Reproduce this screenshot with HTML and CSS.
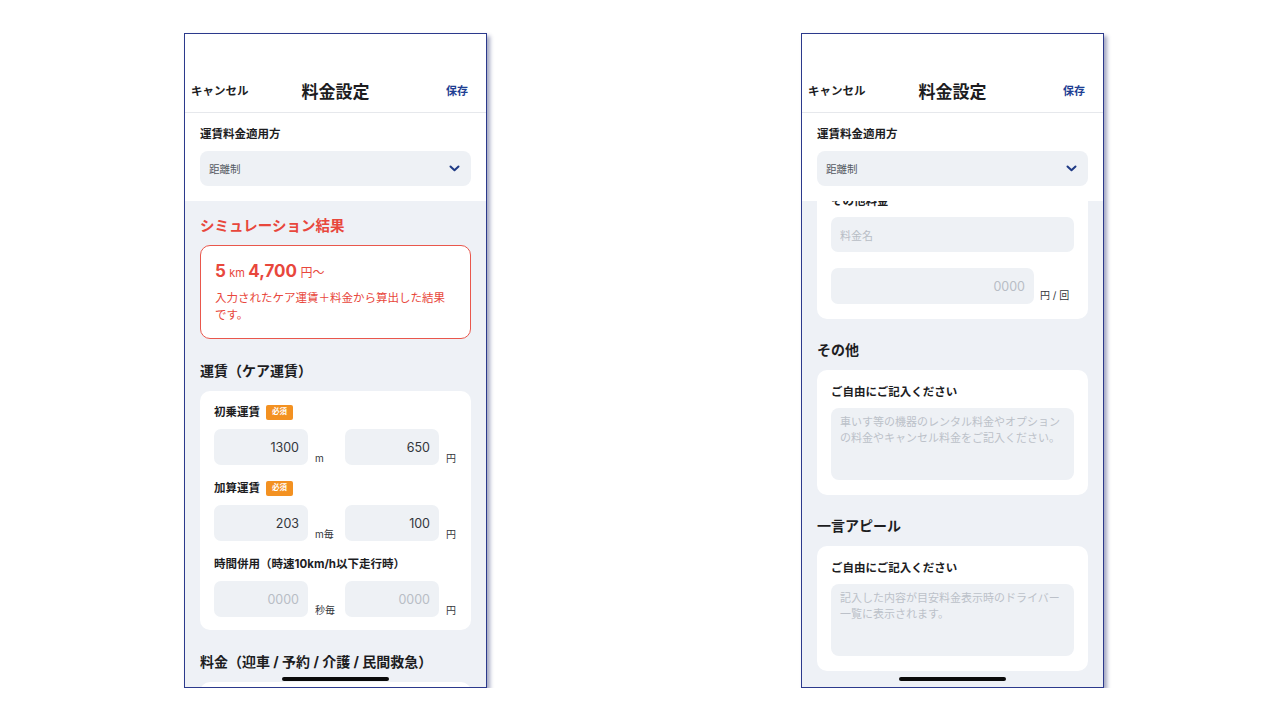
FILE: index.html
```html
<!DOCTYPE html>
<html lang="ja">

<head>
    <meta charset="utf-8">
    <meta name="viewport" content="width=device-width, initial-scale=1.0">
    <title>料金設定</title>
    <link rel="stylesheet" href="styles.css">
</head>

<body>
    <div class="screens">

        <!-- 画面1 -->
        <div class="phone">
            <header>
                <div class="nav">
                    <span class="cancel">キャンセル</span>
                    <h1>料金設定</h1>
                    <span class="save">保存</span>
                </div>
            </header>
            <section class="method">
                <p class="label">運賃料金適用方</p>
                <div class="select">
                    <span>距離制</span>
                    <svg width="11" height="7" viewBox="0 0 11 7"><path d="M1.5 1.5 5.5 5.3l4-3.8" fill="none" stroke="#1f3a85" stroke-width="2" stroke-linecap="round" stroke-linejoin="round"/></svg>
                </div>
            </section>
            <div class="scroll">
                <h2 class="sim-title">シミュレーション結果</h2>
                <div class="sim-box">
                    <p class="sim-value"><b>5</b> <small>km</small> <b>4,700</b> <span>円〜</span></p>
                    <p class="sim-text">入力されたケア運賃＋料金から算出した結果です。</p>
                </div>

                <h2>運賃（ケア運賃）</h2>
                <div class="card">
                    <div class="field">
                        <p class="label">初乗運賃 <span class="badge">必須</span></p>
                        <div class="pair">
                            <div class="group"><div class="input">1300</div><span class="unit">m</span></div>
                            <div class="group"><div class="input">650</div><span class="unit">円</span></div>
                        </div>
                    </div>
                    <div class="field">
                        <p class="label">加算運賃 <span class="badge">必須</span></p>
                        <div class="pair">
                            <div class="group"><div class="input">203</div><span class="unit">m毎</span></div>
                            <div class="group"><div class="input">100</div><span class="unit">円</span></div>
                        </div>
                    </div>
                    <div class="field">
                        <p class="label">時間併用（時速10km/h以下走行時）</p>
                        <div class="pair">
                            <div class="group"><div class="input empty">0000</div><span class="unit">秒毎</span></div>
                            <div class="group"><div class="input empty">0000</div><span class="unit">円</span></div>
                        </div>
                    </div>
                </div>

                <h2>料金（迎車 / 予約 / 介護 / 民間救急）</h2>
                <div class="card"></div>
            </div>
            <div class="home-bar"></div>
        </div>

        <!-- 画面2 -->
        <div class="phone">
            <header>
                <div class="nav">
                    <span class="cancel">キャンセル</span>
                    <h1>料金設定</h1>
                    <span class="save">保存</span>
                </div>
            </header>
            <section class="method">
                <p class="label">運賃料金適用方</p>
                <div class="select">
                    <span>距離制</span>
                    <svg width="11" height="7" viewBox="0 0 11 7"><path d="M1.5 1.5 5.5 5.3l4-3.8" fill="none" stroke="#1f3a85" stroke-width="2" stroke-linecap="round" stroke-linejoin="round"/></svg>
                </div>
            </section>
            <div class="scroll scrolled">
                <div class="card">
                    <p class="label">その他料金</p>
                    <div class="input wide empty left">料金名</div>
                    <div class="group other">
                        <div class="input empty">0000</div><span class="unit">円 / 回</span>
                    </div>
                </div>

                <h2>その他</h2>
                <div class="card">
                    <p class="label">ご自由にご記入ください</p>
                    <div class="textarea">車いす等の機器のレンタル料金やオプションの料金やキャンセル料金をご記入ください。</div>
                </div>

                <h2>一言アピール</h2>
                <div class="card">
                    <p class="label">ご自由にご記入ください</p>
                    <div class="textarea">記入した内容が目安料金表示時のドライバー一覧に表示されます。</div>
                </div>
            </div>
            <div class="home-bar"></div>
        </div>

    </div>
</body>

</html>
```

FILE: styles.css
```css
body {
    margin: 0;
    padding: 0;
    background: #ffffff;
    font-family: "Inter", "Noto Sans CJK JP", sans-serif;
    color: #1d1d1f;
}

p,
h1,
h2 {
    margin: 0;
}

.screens {
    display: flex;
    gap: 314px;
    padding: 33px 0 0 184px;
}

.phone {
    position: relative;
    width: 303px;
    height: 655px;
    box-sizing: border-box;
    border: 1px solid #2c3a8c;
    box-shadow: 3px 3px 4px rgba(50, 60, 120, 0.45);
    background: #ffffff;
    display: flex;
    flex-direction: column;
    overflow: hidden;
}

header {
    padding-top: 34px;
    border-bottom: 1px solid #e6e8ec;
}

.nav {
    height: 44px;
    display: grid;
    grid-template-columns: 1fr auto 1fr;
    align-items: center;
    padding: 0 12px;
}

.cancel {
    margin-left: -6px;
    font-size: 11.5px;
    font-weight: 700;
}

.nav h1 {
    font-size: 17px;
    font-weight: 700;
}

.save {
    text-align: right;
    padding-right: 6px;
    font-size: 11px;
    font-weight: 700;
    color: #1f3f93;
}

.method {
    padding: 13px 15px 15px;
}

.label {
    font-size: 11.5px;
    font-weight: 700;
    line-height: 16px;
    display: flex;
    align-items: center;
}

.select {
    margin-top: 9px;
    height: 35px;
    background: #eef1f5;
    border-radius: 8px;
    display: flex;
    align-items: center;
    justify-content: space-between;
    padding: 0 11px 0 9px;
    font-size: 10.5px;
    color: #555a62;
}

.scroll {
    flex: 1;
    overflow: hidden;
    background: #eef1f6;
    padding: 14px 15px 0;
}

.scrolled {
    padding-top: 0;
}

.scrolled > .card:first-child {
    margin-top: -22px;
}

h2 {
    font-size: 14px;
    font-weight: 700;
    line-height: 20px;
    margin: 22px 0 10px;
}

.scrolled h2 {
    margin-top: 21px;
}

.sim-title {
    font-size: 14.5px;
    line-height: 22px;
    margin: 0 0 8px;
    color: #e8473c;
}

.sim-box {
    background: #ffffff;
    border: 1.5px solid #e9574c;
    border-radius: 10px;
    padding: 13px 14px 14px;
    color: #e8473c;
}

.sim-value {
    line-height: 24px;
    font-size: 12px;
}

.sim-value b {
    font-size: 17px;
}

.sim-value small {
    font-size: 11px;
}

.sim-text {
    margin-top: 5px;
    font-size: 11.5px;
    line-height: 17px;
}

.card {
    background: #ffffff;
    border-radius: 10px;
    padding: 13px 14px;
    min-height: 20px;
}

.field + .field {
    margin-top: 15px;
}

.badge {
    margin-left: 6px;
    width: 27px;
    height: 15px;
    border-radius: 2px;
    background: #f39121;
    color: #ffffff;
    font-size: 7.5px;
    display: inline-flex;
    align-items: center;
    justify-content: center;
}

.pair {
    margin-top: 9px;
    display: grid;
    grid-template-columns: 131px 1fr;
}

.group {
    display: flex;
}

.input {
    width: 94px;
    height: 36px;
    box-sizing: border-box;
    background: #eef1f5;
    border-radius: 7px;
    display: flex;
    align-items: center;
    justify-content: flex-end;
    padding: 0 9px;
    font-size: 12.5px;
    color: #33363b;
}

.input.empty {
    color: #b8bdc5;
}

.input.left {
    justify-content: flex-start;
    font-size: 11px;
}

.input.wide {
    width: 100%;
    height: 35px;
    margin-top: 8px;
}

.unit {
    align-self: flex-end;
    margin-left: 7px;
    font-size: 10px;
    line-height: 13px;
    color: #33363b;
}

.other {
    margin-top: 16px;
}

.other .input {
    width: 203px;
}

.other .unit {
    margin-left: 6px;
    margin-bottom: 2px;
}

.textarea {
    margin-top: 8px;
    height: 72px;
    box-sizing: border-box;
    background: #eef1f5;
    border-radius: 8px;
    padding: 6px 9px;
    font-size: 11px;
    line-height: 16px;
    color: #bcc1c9;
}

.scrolled .card {
    padding-top: 14px;
    padding-bottom: 15px;
}

.home-bar {
    position: absolute;
    left: 50%;
    bottom: 6px;
    width: 107px;
    height: 4px;
    margin-left: -54px;
    border-radius: 2px;
    background: #0a0a0a;
}
```
